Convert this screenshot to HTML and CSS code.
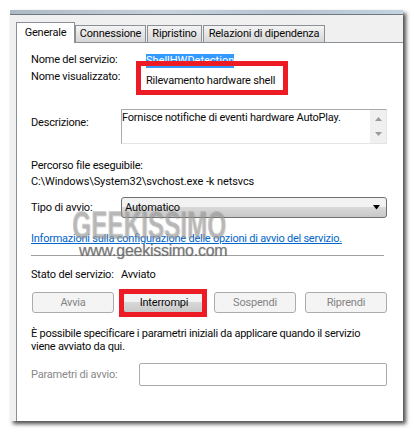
FILE: index.html
```html
<!DOCTYPE html>
<html lang="it">
<head>
<meta charset="utf-8">
<title>Proprietà servizio</title>
<link rel="stylesheet" href="styles.css">
</head>
<body>
<div class="dialog">
  <div class="titlebar"></div>
  <div class="tabs">
    <div class="tab active">Generale</div>
    <div class="tab t-conn">Connessione</div>
    <div class="tab t-ripr">Ripristino</div>
    <div class="tab t-rel">Relazioni di dipendenza</div>
  </div>
  <div class="panel">
    <div class="row r-name"><span class="lab lab-wide lab-name">Nome del servizio:</span><span class="sel">ShellHWDetection</span></div>
    <div class="row r-disp"><span class="lab lab-wide">Nome visualizzato:</span><span class="val">Rilevamento hardware shell</span></div>
    <span class="redbox rb-name"></span>
    <div class="row r-desc"><span class="lab lab-desc">Descrizione:</span>
      <div class="textarea"><span class="tatext">Fornisce notifiche di eventi hardware AutoPlay.</span>
        <div class="scroll">
          <svg width="9" height="6" viewBox="0 0 9 6"><path d="M4.500 1 8 5H1z" fill="#9a9a9a"/></svg>
          <svg width="9" height="6" viewBox="0 0 9 6"><path d="M4.500 5 8 1H1z" fill="#9a9a9a"/></svg>
        </div>
      </div>
    </div>
    <div class="path-label">Percorso file eseguibile:</div>
    <div class="path-value">C:\Windows\System32\svchost.exe -k netsvcs</div>
    <div class="row r-type"><span class="lab">Tipo di avvio:</span>
      <div class="select"><span>Automatico</span>
        <svg width="9" height="5" viewBox="0 0 9 5"><path d="M1 0h7L4.500 4.500z" fill="#000"/></svg>
      </div>
    </div>
    <a class="link">Informazioni sulla configurazione delle opzioni di avvio del servizio.</a>
    <div class="sep"></div>
    <div class="row status"><span class="lab">Stato del servizio:</span><span>Avviato</span></div>
    <div class="buttons">
      <div class="btn off">Avvia</div>
      <div class="btn on">Interrompi<span class="redbox rb-btn"></span></div>
      <div class="btn off">Sospendi</div>
      <div class="btn off">Riprendi</div>
    </div>
    <p class="note">È possibile specificare i parametri iniziali da applicare quando il servizio<br>viene avviato da qui.</p>
    <div class="row r-param"><span class="lab-off">Parametri di avvio:</span><div class="input"></div></div>
  </div>
  <div class="mark"><div class="mark-big">GEEKISSIMO</div><div class="mark-url">www.geekissimo.com</div></div>
</div>
</body>
</html>
```

FILE: styles.css
```css
html, body { margin: 0; padding: 0; background: #fff; }
body { width: 414px; height: 432px; overflow: hidden; font: 11px/16px Roboto, sans-serif; letter-spacing: -.2px; color: #0a0a0a; }
.dialog { position: relative; box-sizing: border-box; width: 393px; height: 411px; margin: 10px 0 0 10px; background: #f0f0f0; box-shadow: 3px 3px 4px rgba(0,0,0,.7); padding: 0 0 0 6px; }
.titlebar { box-sizing: border-box; height: 5px; margin-left: -6px; background: linear-gradient(90deg, #aeb9c6, #c7d2dd 40%, #b7c4d2 70%, #c3d3e0); border-bottom: 1px solid #6e7780; }
.tabs { display: flex; height: 27px; align-items: flex-end; }
.tab { box-sizing: border-box; flex: none; height: 17px; border: 1px solid #8a9096; border-bottom: 0; background: linear-gradient(#f4f4f4, #d6d6d6); line-height: 16px; text-align: center; }
.active { width: 59px; height: 21px; background: #fff; line-height: 19px; margin-bottom: -1px; position: relative; z-index: 1; }
.t-conn { width: 71px; }
.t-ripr { width: 55px; margin-left: 1px; }
.t-rel { width: 122px; margin-left: 1px; }
.panel { box-sizing: border-box; height: 379px; background: #fff; border-left: 1px solid #8a9096; border-top: 1px solid #8a9096; padding: 8px 0 0 14px; position: relative; }
.row { display: flex; align-items: flex-start; white-space: nowrap; }
.lab { flex: none; width: 90px; }
.lab-wide { width: 115px; }
.lab-name { padding-top: 1px; }
.lab-desc { padding-top: 6px; }
.r-name { height: 18px; }
.sel { background: #3399ff; color: #fff; letter-spacing: 0; line-height: 14px; margin-top: 3px; }
.r-disp { height: 40px; }
.val { padding-top: 4px; }
.redbox { position: absolute; box-sizing: border-box; border: 5px solid #ed1c24; }
.rb-name { left: 119px; top: 18px; width: 152px; height: 34px; }
.textarea { box-sizing: border-box; width: 266px; height: 35px; border: 1px solid #aaa; border-bottom-color: #e4e4e4; border-right-color: #e4e4e4; display: flex; justify-content: space-between; line-height: 14px; }
.tatext { padding-top: 1px; }
.scroll { flex: none; width: 16px; display: flex; flex-direction: column; justify-content: space-between; align-items: center; background: #f0f0f0; padding: 6px 0; box-sizing: border-box; }
.path-label { margin-top: 14px; }
.path-value { letter-spacing: -.1px; }
.r-type { margin-top: 7px; align-items: center; }
.select { box-sizing: border-box; width: 266px; height: 21px; border: 1px solid #707070; border-radius: 3px; background: linear-gradient(#f2f2f2 45%, #d8d8d8 50%, #c8c8c8); display: flex; align-items: center; justify-content: space-between; padding: 0 5px 0 3px; }
.link { display: block; width: max-content; margin-top: 13px; color: #0066cc; letter-spacing: -.24px; text-decoration: underline; }
.sep { width: 353px; height: 1px; background: #a0a0a0; margin-top: 8px; }
.status { margin-top: 11px; }
.buttons { display: grid; grid-template-columns: 82px 82px 82px 82px; column-gap: 9px; margin: 9px 0 0 1px; }
.btn { box-sizing: border-box; height: 21px; line-height: 20px; text-align: center; border-radius: 3px; position: relative; }
.off { border: 1px solid #ababab; background: #f4f4f4; color: #838383; }
.on { border: 1px solid #707070; background: linear-gradient(#f2f2f2 45%, #d8d8d8 50%, #c8c8c8); }
.rb-btn { left: -5px; top: -4px; width: 88px; height: 28px; }
.note { margin: 14px 0 0; line-height: 13px; letter-spacing: -.26px; white-space: nowrap; }
.r-param { margin-top: 10px; align-items: center; }
.lab-off { flex: none; width: 108px; color: #888; }
.input { box-sizing: border-box; width: 248px; height: 23px; border: 1px solid #ababab; border-radius: 2px; }
.mark { position: absolute; left: 62px; top: 195px; }
.mark-big { font: bold 30px/30px "Liberation Sans", sans-serif; letter-spacing: 0; color: rgba(165,165,165,.5); white-space: nowrap; transform: scale(.81,1.3); transform-origin: left top; text-shadow: 1px 1px 1px rgba(120,120,120,.4); }
.mark-url { position: absolute; left: 7px; top: 36px; font: 16px/20px "Liberation Sans", sans-serif; letter-spacing: -.25px; color: rgba(100,100,100,.75); text-shadow: 0 0 1px rgba(100,100,100,.6); white-space: nowrap; }
```
